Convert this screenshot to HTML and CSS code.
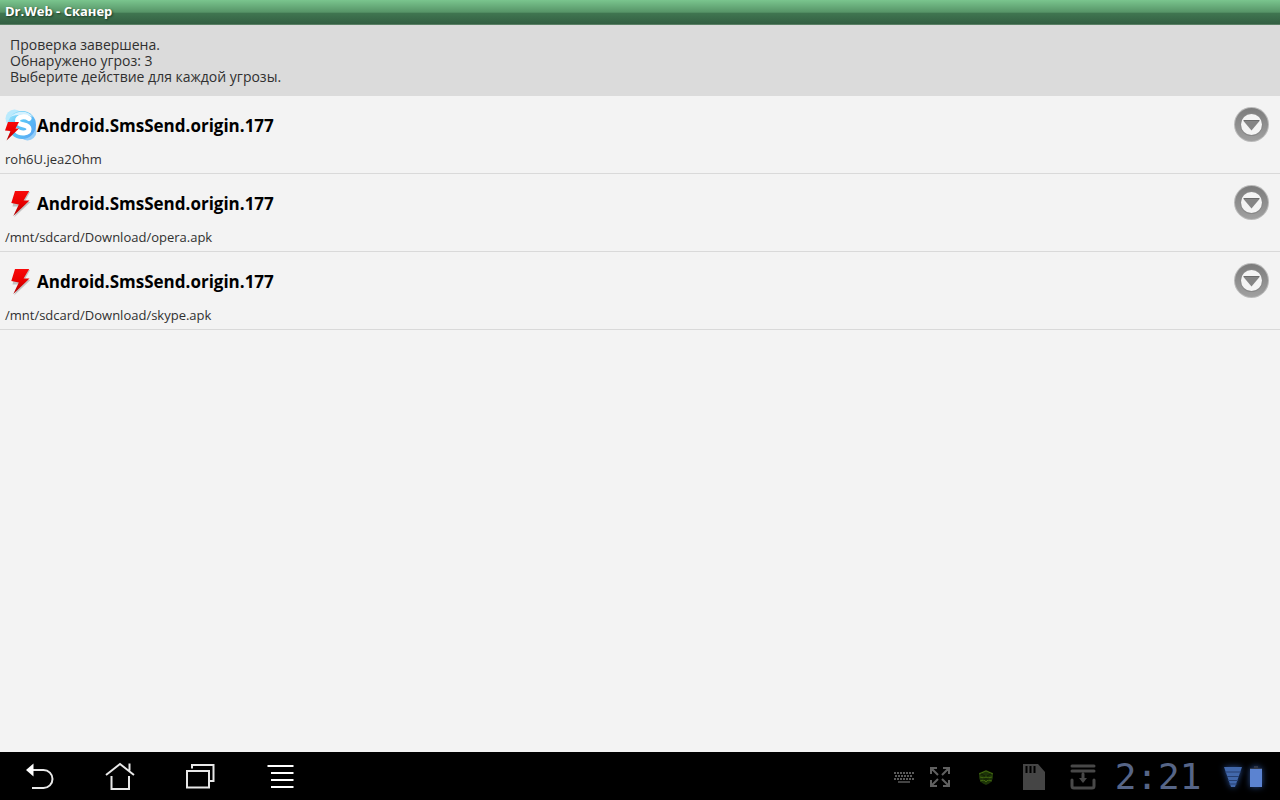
FILE: index.html
```html
<!DOCTYPE html>
<html lang="ru">
<head>
<meta charset="utf-8">
<title>Dr.Web - Сканер</title>
<link rel="stylesheet" href="styles.css">
</head>
<body>
<svg class="defs" aria-hidden="true">
  <defs>
    <linearGradient id="red" x1="0" y1="0" x2="0" y2="1"><stop offset="0" stop-color="#f80a0a"/><stop offset=".5" stop-color="#e80000"/><stop offset="1" stop-color="#a80000"/></linearGradient>
    <linearGradient id="sky" x1="0" y1="0" x2="1" y2=".6"><stop offset="0" stop-color="#a5e6fc"/><stop offset=".5" stop-color="#5cc8f7"/><stop offset="1" stop-color="#58aaf4"/></linearGradient>
    <linearGradient id="ring" x1="0" y1="0" x2="0" y2="1"><stop offset="0" stop-color="#7c7c7c"/><stop offset="1" stop-color="#a0a0a0"/></linearGradient>
    <symbol id="bolt" viewBox="0 0 32 32"><path d="M11 5H25L19.500 15H25.500L9 30.500L14.500 19.500H7.500Z" fill="#000" opacity=".2"/><path d="M10 4H24.200L18.600 13.500H24.500L8.300 29L13.800 17.500L6.300 16Z" fill="url(#red)"/></symbol>
    <symbol id="more" viewBox="0 0 36 36"><circle cx="18.500" cy="17.500" r="17.500" fill="#bababa"/><circle cx="18.500" cy="17.500" r="16.500" fill="url(#ring)"/><circle cx="18.500" cy="17.500" r="11.500" fill="#888"/><circle cx="18.500" cy="17.500" r="10.500" fill="#f4f4f4"/><path d="M10.500 14h16L18.500 23.500z" fill="#858585"/><path d="M10.500 13.500h16" stroke="#6c6c6c" stroke-width="1"/></symbol>
  </defs>
</svg>
<div class="screen">
  <header class="titlebar"><h1>Dr.Web - Сканер</h1></header>
  <section class="summary">
    <p>Проверка завершена.</p>
    <p>Обнаружено угроз: 3</p>
    <p>Выберите действие для каждой угрозы.</p>
  </section>
  <main class="content">
    <ul class="threats">
      <li class="threat">
        <div class="head">
          <svg class="icon" viewBox="0 0 32 32" aria-hidden="true">
            <circle cx="9.500" cy="9.500" r="9" fill="#b9eafd"/><circle cx="22.500" cy="22.500" r="9" fill="#94cdf8"/><circle cx="17" cy="16" r="14" fill="url(#sky)"/>
            <path d="M5 8C12 1 23 1 28 8C21 5 12 5 5 8Z" fill="#d5f1fe"/>
            <path d="M24 9.500C20 6.500 12.500 7.500 12.500 12C12.500 17 24 14.500 24 20C24 25 15 25 11.500 21.500" fill="none" stroke="#fff" stroke-width="5" stroke-linecap="round"/>
            <path d="M3 13h11L10.500 19.500h3.500L1.500 31.500L5.500 22L0 21.500Z" fill="url(#red)"/>
          </svg>
          <h2>Android.SmsSend.origin.177</h2>
          <button class="more" aria-label="Действия"><svg><use href="#more"/></svg></button>
        </div>
        <p class="path">roh6U.jea2Ohm</p>
      </li>
      <li class="threat">
        <div class="head">
          <svg class="icon" aria-hidden="true"><use href="#bolt"/></svg>
          <h2>Android.SmsSend.origin.177</h2>
          <button class="more" aria-label="Действия"><svg><use href="#more"/></svg></button>
        </div>
        <p class="path">/mnt/sdcard/Download/opera.apk</p>
      </li>
      <li class="threat">
        <div class="head">
          <svg class="icon" aria-hidden="true"><use href="#bolt"/></svg>
          <h2>Android.SmsSend.origin.177</h2>
          <button class="more" aria-label="Действия"><svg><use href="#more"/></svg></button>
        </div>
        <p class="path">/mnt/sdcard/Download/skype.apk</p>
      </li>
    </ul>
  </main>
  <footer class="systembar">
    <nav class="keys">
      <button class="key" aria-label="Назад"><svg viewBox="0 0 32 32"><path d="M8 9h11.500a9 9 0 0 1 0 18H8" fill="none" stroke="#e8e8e8" stroke-width="2"/><path d="M2 9L9.500 2.500v13z" fill="#fff"/></svg></button>
      <button class="key" aria-label="Домой"><svg viewBox="0 0 32 32"><path d="M2 14L16 3l14 11M25.500 2.500v7M7.500 15v13h17.500v-13" fill="none" stroke="#e8e8e8" stroke-width="2"/></svg></button>
      <button class="key" aria-label="Недавние"><svg viewBox="0 0 32 32"><path d="M3 10h22V26.500h-22zM8 7.500V4h21.500v16H26" fill="none" stroke="#e8e8e8" stroke-width="2"/></svg></button>
      <button class="key" aria-label="Меню"><svg viewBox="0 0 32 32"><path d="M3.500 5h26M7 12h22.500M7 19h22.500M7 26h22.500" stroke="#fff" stroke-width="2"/></svg></button>
    </nav>
    <div class="status">
      <svg class="keyboard" viewBox="0 0 20 12"><path d="M0 2h20M1 5h18M0 8h20" stroke="#5a5a5a" stroke-width="2" stroke-dasharray="2 1"/><path d="M4 11h12" stroke="#5a5a5a" stroke-width="1.500"/></svg>
      <svg class="expand" viewBox="0 0 20 20"><path d="M1 7V1h6M1 1l7 7M13 1h6v6M19 1l-7 7M1 13v6h6M1 19l7-7M19 13v6h-6M19 19l-7-7" fill="none" stroke="#606060" stroke-width="2"/></svg>
      <svg class="spider" viewBox="0 0 16 16"><path d="M1 4L8 1l7 3v4q0 5-7 8Q1 13 1 8z" fill="#1d3408"/><path d="M1 5l7-3 7 3M2 8l4 1 2-1 2 1 4-1M2 12l4-1 2 2 2-2 4 1" fill="none" stroke="#43690f"/><path d="M3 5l4 2M13 5L9 7M5 10h6" stroke="#101c05"/></svg>
      <svg class="sd" viewBox="0 0 24 28"><path d="M1 1h15l7 8v18H1z" fill="#454545"/><path d="M4.500 3v7M8.500 3v7M12.500 3v7" stroke="#000" stroke-width="2"/></svg>
      <svg class="download" viewBox="0 0 26 26"><path d="M2 2h22M2 7h22M2 16v6q0 2 2 2h18q2 0 2-2v-6M13 10v6" fill="none" stroke="#484848" stroke-width="3" stroke-linecap="round"/><path d="M9 14h8l-4 5z" fill="#484848"/></svg>
      <time class="clock">2:21</time>
      <svg class="wifi" viewBox="0 0 18 22"><path d="M0 1h18L11 21H7z" fill="#4268ab"/><path d="M1 6h16M3 10.500h12M4 14.500h10M5 18h8" stroke="#263f70"/></svg>
      <svg class="battery" viewBox="0 0 12 22"><path d="M4 0h4v2h4v2H0V2h4z" fill="#303748"/><path d="M0 3h12v18H0z" fill="#5b83d1"/></svg>
    </div>
  </footer>
</div>
</body>
</html>
```

FILE: styles.css
```css
* { box-sizing: border-box; margin: 0; padding: 0; }
body { font-family: "Open Sans", "Noto Sans", sans-serif; font-size: 14px; font-kerning: none; color: #303030; background: #f3f3f3; }
.defs { position: absolute; width: 0; height: 0; }
.screen { display: flex; flex-direction: column; min-height: 100vh; }

.titlebar { padding: 1px 5px 4px; background: linear-gradient(#7ac58e, #579568 48%, #3f7550 54%, #346043 94%, #6c8f75); }
.titlebar h1 { font-size: 13px; line-height: 20px; color: #fff; text-shadow: 1px 1px 2px #1c3a26; }
.summary { padding: 12px 10px 11px; line-height: 16px; background: #dbdbdb; }

.content { flex: 1; }
.threats { list-style: none; }
.threat { padding: 10px 5px 4px; border-bottom: 1px solid #d9d9d9; }
.head { display: flex; align-items: center; height: 38px; }
.head h2 { flex: 1; padding-top: 2px; font-size: 17px; line-height: 24px; color: #000; }
.icon { width: 32px; height: 32px; }
.more { width: 36px; height: 36px; margin-right: 6px; border: 0; background: none; }
.more svg { display: block; width: 36px; height: 36px; }
.path { padding-top: 5px; font-size: 13px; line-height: 20px; }

.systembar { display: flex; justify-content: space-between; align-items: center; height: 48px; background: #000; }
.keys { display: flex; }
.key { display: flex; align-items: center; justify-content: center; width: 80px; height: 48px; padding-top: 2px; border: 0; background: none; }
.key svg { width: 32px; height: 32px; }
.status { display: flex; align-items: center; height: 48px; padding: 2px 18px 0 0; }
.keyboard { width: 20px; height: 12px; margin-right: 16px; }
.expand { width: 20px; height: 20px; margin-right: 28px; }
.spider { width: 16px; height: 16px; margin-right: 28px; }
.sd { width: 24px; height: 28px; margin-right: 24px; }
.download { width: 26px; height: 26px; margin-right: 16px; }
.clock { width: 92px; margin-right: 20px; text-align: center; font: 200 36px/40px "DejaVu Sans Mono", monospace; color: #566587; }
.wifi { width: 18px; height: 22px; margin-right: 8px; filter: drop-shadow(0 0 3px #274a8c); }
.battery { width: 12px; height: 22px; filter: drop-shadow(0 0 3px #274a8c); }
```
